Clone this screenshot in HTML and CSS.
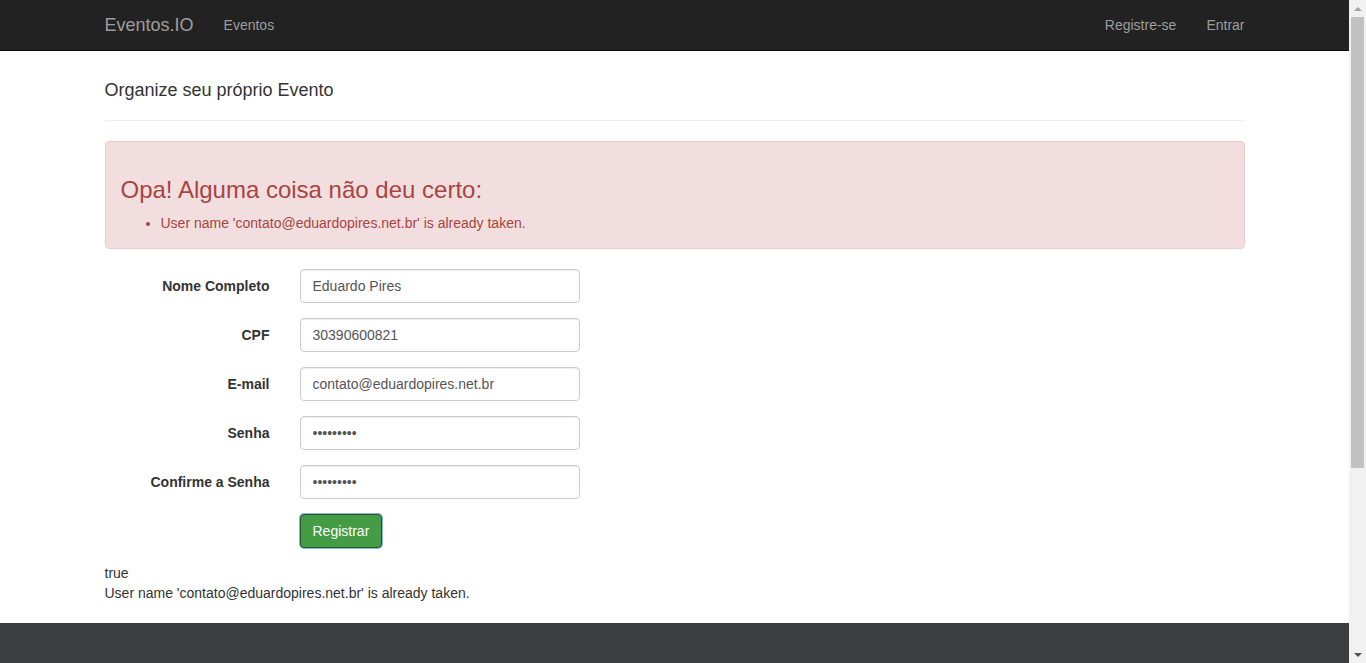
FILE: index.html
```html
<!DOCTYPE html>
<html lang="pt-BR">
<head>
<meta charset="utf-8">
<title>Eventos.IO</title>
<link rel="stylesheet" href="styles.css">
</head>
<body>
<div class="page">
<nav class="navbar">
  <div class="container nav-inner">
    <div class="nav-left">
      <a class="brand" href="#">Eventos.IO</a>
      <a class="nav-link" href="#">Eventos</a>
    </div>
    <div class="nav-right">
      <a class="nav-link" href="#">Registre-se</a>
      <a class="nav-link" href="#">Entrar</a>
    </div>
  </div>
</nav>
<main class="container body-content">
  <h4 class="page-title">Organize seu próprio Evento</h4>
  <hr class="divider">
  <div class="alert">
    <h3 class="alert-title">Opa! Alguma coisa não deu certo:</h3>
    <ul class="alert-list">
      <li>User name 'contato@eduardopires.net.br' is already taken.</li>
    </ul>
  </div>
  <form class="form">
    <div class="form-group">
      <label class="control-label">Nome Completo</label>
      <div class="control"><input class="form-control" type="text" value="Eduardo Pires"></div>
    </div>
    <div class="form-group">
      <label class="control-label">CPF</label>
      <div class="control"><input class="form-control" type="text" value="30390600821"></div>
    </div>
    <div class="form-group">
      <label class="control-label">E-mail</label>
      <div class="control"><input class="form-control" type="text" value="contato@eduardopires.net.br"></div>
    </div>
    <div class="form-group">
      <label class="control-label">Senha</label>
      <div class="control"><input class="form-control" type="password" value="123456789"></div>
    </div>
    <div class="form-group">
      <label class="control-label">Confirme a Senha</label>
      <div class="control"><input class="form-control" type="password" value="123456789"></div>
    </div>
    <div class="form-group">
      <div class="control-label"></div>
      <div class="control"><button class="btn-success" type="button">Registrar</button></div>
    </div>
  </form>
  <div class="debug">true</div>
  <div class="debug">User name 'contato@eduardopires.net.br' is already taken.</div>
</main>
<footer class="footer"></footer>
</div>
<div class="scrollbar" aria-hidden="true">
  <div class="sb-arrow sb-up"></div>
  <div class="sb-thumb"></div>
  <div class="sb-arrow sb-down"></div>
</div>
</body>
</html>
```
FILE: styles.css
```css
* { box-sizing: border-box; }
html, body { margin: 0; padding: 0; }
body {
  font-family: "Liberation Sans", Arial, sans-serif;
  font-size: 14px;
  line-height: 20px;
  color: #333;
  background: #fff;
}
.page { margin-right: 17px; }
a { text-decoration: none; }
.container {
  width: 1170px;
  margin: 0 auto;
  padding: 0 15px;
}
.navbar {
  background: #222;
  border-bottom: 1px solid #080808;
  height: 51px;
}
.nav-inner {
  display: flex;
  justify-content: space-between;
  height: 50px;
}
.nav-left, .nav-right { display: flex; }
.nav-left { margin-left: -15px; }
.nav-right { margin-right: -15px; }
.brand {
  color: #9d9d9d;
  font-size: 18px;
  line-height: 20px;
  padding: 15px;
}
.nav-link {
  color: #9d9d9d;
  font-size: 14px;
  line-height: 20px;
  padding: 15px;
}
.body-content { padding-top: 20px; padding-bottom: 20px; }
.page-title {
  font-size: 18px;
  font-weight: 500;
  line-height: 19px;
  margin: 10px 0;
}
.divider {
  border: 0;
  border-top: 1px solid #eee;
  margin: 20px 0;
  height: 0;
}
.alert {
  background: #f2dede;
  border: 1px solid #ebccd1;
  color: #a94442;
  border-radius: 4px;
  padding: 15px;
  margin-bottom: 20px;
}
.alert-title {
  font-size: 24px;
  font-weight: 500;
  line-height: 26.4px;
  margin: 20px 0 10px;
}
.alert-list {
  margin: 0;
  padding-left: 40px;
}
.form { margin: 0; }
.form-group {
  display: flex;
  margin: 0 -15px 15px;
}
.control-label {
  width: 195px;
  padding: 7px 15px 0;
  text-align: right;
  font-weight: bold;
}
.control { padding: 0 15px; flex: 1; }
.form-control {
  display: block;
  width: 280px;
  height: 34px;
  padding: 6px 12px;
  font-family: "Liberation Sans", Arial, sans-serif;
  font-size: 14px;
  line-height: 20px;
  color: #555;
  background: #fff;
  border: 1px solid #ccc;
  border-radius: 4px;
  box-shadow: inset 0 1px 1px rgba(0,0,0,.075);
}
.btn-success {
  height: 34px;
  padding: 6px 12px;
  font-family: "Liberation Sans", Arial, sans-serif;
  font-size: 14px;
  line-height: 20px;
  color: #fff;
  background: #449d44;
  border: 1px solid #255625;
  border-radius: 4px;
  box-shadow: 0 0 0 1px #8fb4ea;
  cursor: pointer;
}
.debug { line-height: 20px; }
.footer {
  background: #3c3d41;
  height: 302px;
}
.scrollbar {
  position: fixed;
  top: 0;
  right: 0;
  width: 17px;
  height: 100vh;
  background: #f1f1f1;
  display: flex;
  flex-direction: column;
}
.sb-arrow {
  height: 17px;
  position: relative;
}
.sb-up::after, .sb-down::after {
  content: "";
  position: absolute;
  left: 5px;
  border-left: 4px solid transparent;
  border-right: 4px solid transparent;
}
.sb-up::after { top: 7px; border-bottom: 4px solid #a3a3a3; }
.sb-down::after { top: 7px; border-top: 4px solid #505050; }
.sb-thumb {
  margin: 0 2px;
  height: 451px;
  background: #c1c1c1;
}
.sb-down { margin-top: auto; }
```
